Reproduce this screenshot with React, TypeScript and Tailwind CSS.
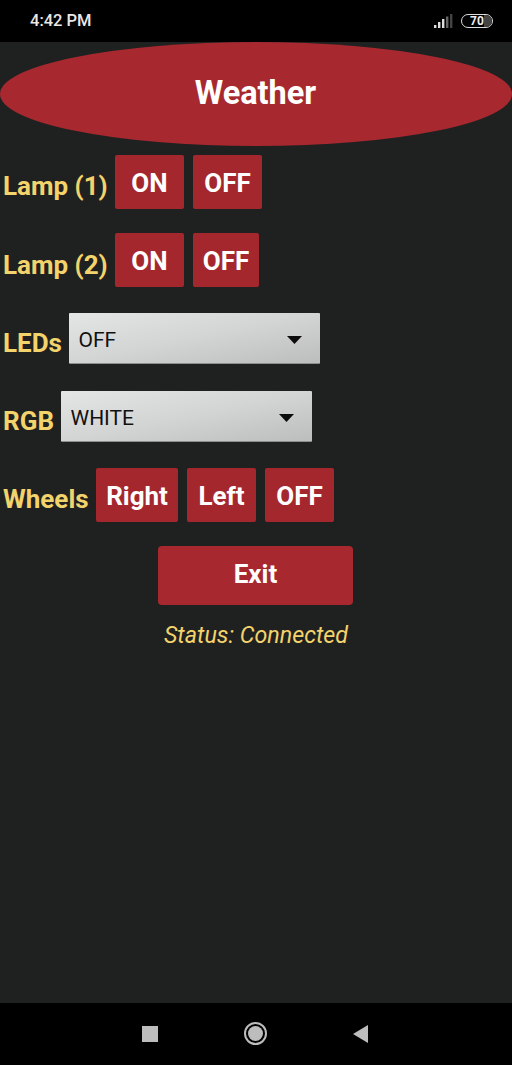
const font = { fontFamily: "Roboto, sans-serif" };

function Btn({ label, w }: { label: string; w: string }) {
  return (
    <div className={`${w} h-[54px] flex items-center justify-center bg-[#a5272e] rounded-[2px] text-white text-[26px] font-bold leading-none pt-[2px]`}>
      {label}
    </div>
  );
}

function Label({ children, w }: { children: string; w: string }) {
  return (
    <div className={`${w} text-[#f3d36b] text-[26px] font-bold leading-[30px] whitespace-nowrap`}>{children}</div>
  );
}

function Select({ value }: { value: string }) {
  return (
    <div className="w-[251px] h-[51px] flex items-center justify-between pl-[9.5px] pr-[18px] rounded-[1px] bg-gradient-to-br from-[#e4e6e5] via-[#d3d5d4] to-[#bcbebd] border-b border-[#8d8f8e]">
      <span className="text-[#111] text-[21px] leading-none pt-[5px]">{value}</span>
      <svg width="15" height="8" viewBox="0 0 15 8" className="block mt-[4px]"><path d="M0 0H15L7.5 8Z" fill="#0c0c0c" /></svg>
    </div>
  );
}

export default function App() {
  return (
    <div style={font} className="w-[512px] h-[1065px] flex flex-col bg-[#1f2121] overflow-hidden">
      <div className="h-[42px] bg-black flex items-center justify-between pl-[30px] pr-[19px] shrink-0">
        <span className="text-[#e8e8e8] text-[16.5px] font-medium leading-none">4:42 PM</span>
        <div className="flex items-center gap-[8px]">
          <svg width="19" height="14" viewBox="0 0 19 14" className="block">
            <rect x="0" y="11" width="2.4" height="3" fill="#ddd" />
            <rect x="4" y="8" width="2.4" height="6" fill="#ddd" />
            <rect x="8" y="5" width="2.4" height="9" fill="#ddd" />
            <rect x="12" y="2.5" width="2.4" height="11.5" fill="#666" />
            <rect x="16" y="0" width="2.4" height="14" fill="#444" />
          </svg>
          <div className="relative w-[32px] h-[14px] rounded-full border border-[#ddd] flex items-center justify-center overflow-hidden">
            <div className="absolute right-0 top-0 bottom-0 w-[8px] bg-[#444]" />
            <span className="relative text-[#eee] text-[12px] font-bold leading-none">70</span>
          </div>
        </div>
      </div>

      <div className="flex-1 flex flex-col">
        <div className="w-[512px] h-[104px] rounded-[50%] bg-[#a7292f] flex items-center justify-center text-white text-[32.5px] font-bold leading-none pb-[2px] pr-[1px]">
          Weather
        </div>

        <div className="mt-[9px] pl-[3px] flex items-start">
          <div className="mt-[16px] mr-[7px]"><Label w="w-[105px]">Lamp (1)</Label></div>
          <div className="flex gap-[9px]">
            <Btn label="ON" w="w-[69px]" />
            <Btn label="OFF" w="w-[69px]" />
          </div>
        </div>

        <div className="mt-[24px] pl-[3px] flex items-start">
          <div className="mt-[17px] mr-[7px]"><Label w="w-[105px]">Lamp (2)</Label></div>
          <div className="flex gap-[9px]">
            <Btn label="ON" w="w-[69px]" />
            <Btn label="OFF" w="w-[66px]" />
          </div>
        </div>

        <div className="mt-[26px] pl-[3px] flex items-start">
          <div className="mt-[15px] mr-[6px]"><Label w="w-[60px]">LEDs</Label></div>
          <Select value="OFF" />
        </div>

        <div className="mt-[27px] pl-[3px] flex items-start">
          <div className="mt-[15px] mr-[7px]"><Label w="w-[51px]">RGB</Label></div>
          <Select value="WHITE" />
        </div>

        <div className="mt-[26px] pl-[3px] flex items-start">
          <div className="mt-[16px] mr-[7px]"><Label w="w-[86px]">Wheels</Label></div>
          <div className="flex gap-[9px]">
            <Btn label="Right" w="w-[82px]" />
            <Btn label="Left" w="w-[69px]" />
            <Btn label="OFF" w="w-[69px]" />
          </div>
        </div>

        <div className="mt-[24px] ml-[158px] w-[195px] h-[59px] rounded-[4px] bg-[#a7282f] flex items-center justify-center text-white text-[26px] font-bold leading-none pb-[3px]">
          Exit
        </div>

        <div className="mt-[16px] text-center italic text-[#f3d36b] text-[23.25px] leading-[28px]">Status: Connected</div>
      </div>

      <div className="h-[62px] bg-black shrink-0 flex items-center justify-center pb-[1px]">
        <div className="w-[270px] h-[24px] flex items-center justify-between">
          <div className="ml-[21px] w-[16px] h-[16px] bg-[#bdbdbd]" />
          <div className="w-[23px] h-[23px] rounded-full border-2 border-[#bdbdbd] flex items-center justify-center">
            <div className="w-[15px] h-[15px] rounded-full bg-[#bdbdbd]" />
          </div>
          <svg width="15" height="18" viewBox="0 0 15 18" className="block mr-[23px]"><path d="M15 0V18L0 9Z" fill="#bdbdbd" /></svg>
        </div>
      </div>
    </div>
  );
}
